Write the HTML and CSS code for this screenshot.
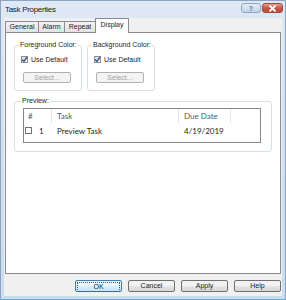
FILE: index.html
```html
<!DOCTYPE html>
<html lang="en">
<head>
  <meta charset="UTF-8">
  <title>Task Properties</title>
  <link rel="stylesheet" href="styles.css">
</head>
<body>
  <div class="window">
    <div class="titlebar">
      <span class="title">Task Properties</span>
      <div class="caption-btns">
        <span class="cap-btn help">?</span>
        <span class="cap-btn close">
          <svg width="9" height="7" viewBox="0 0 9 7"><path d="M1.5 0.5 L7.5 6.5 M7.5 0.5 L1.5 6.5" stroke="#fff" stroke-width="1.8"/></svg>
        </span>
      </div>
    </div>

    <div class="client">
      <div class="tabs">
        <span class="tab tab-general">General</span>
        <span class="tab tab-alarm">Alarm</span>
        <span class="tab tab-repeat">Repeat</span>
        <span class="tab tab-display active">Display</span>
      </div>

      <div class="panel">
        <div class="color-groups">
          <fieldset class="group">
            <legend>Foreground Color:</legend>
            <label class="check"><span class="box"><svg width="7" height="7" viewBox="0 0 7 7"><path d="M1 3.5 L3 5.5 L6 1" fill="none" stroke="#3b5a9a" stroke-width="1.4"/></svg></span>Use Default</label>
            <button class="btn" disabled>Select...</button>
          </fieldset>
          <fieldset class="group">
            <legend>Background Color:</legend>
            <label class="check"><span class="box"><svg width="7" height="7" viewBox="0 0 7 7"><path d="M1 3.5 L3 5.5 L6 1" fill="none" stroke="#3b5a9a" stroke-width="1.4"/></svg></span>Use Default</label>
            <button class="btn" disabled>Select...</button>
          </fieldset>
        </div>

        <fieldset class="group preview">
          <legend>Preview:</legend>
          <div class="list">
            <div class="list-head">
              <span class="col col-num">#</span>
              <span class="col col-task">Task</span>
              <span class="col col-due">Due Date</span>
              <span class="col col-fill"></span>
            </div>
            <div class="list-row">
              <span class="col col-num"><span class="row-box"></span>1</span>
              <span class="col col-task">Preview Task</span>
              <span class="col col-due">4/19/2019</span>
            </div>
          </div>
        </fieldset>
      </div>

      <div class="dialog-btns">
        <button class="dbtn default"><span class="focus">OK</span></button>
        <button class="dbtn">Cancel</button>
        <button class="dbtn">Apply</button>
        <button class="dbtn">Help</button>
      </div>
    </div>
  </div>
</body>
</html>
```

FILE: styles.css
```css
/* Page */
body {
  margin: 0;
  font-family: "Liberation Sans", Arial, sans-serif;
  font-size: 7px;
  color: #1e1e1e;
  background: #fff;
}

/* Window frame */
.window {
  width: 286px;
  height: 300px;
  box-sizing: border-box;
  background: linear-gradient(#dfe9f5, #d3e1f0 40%, #cadcee);
  border: 1px solid #8aa6c4;
  border-bottom-color: #56b4dc;
  display: flex;
  flex-direction: column;
}

.titlebar {
  height: 17px;
  box-sizing: border-box;
  display: flex;
  align-items: flex-start;
  padding: 2px 2px 0 4px;
}

.title {
  font-size: 8px;
  color: #1c1c1c;
  padding-top: 2px;
  letter-spacing: -0.3px;
}

.caption-btns {
  margin-left: auto;
  display: flex;
  gap: 1px;
}

.cap-btn {
  height: 10px;
  display: flex;
  align-items: center;
  justify-content: center;
  border-radius: 3px;
  box-sizing: border-box;
}

.help {
  width: 20px;
  border: 1px solid #8ea7c4;
  background: linear-gradient(#e4edf7, #c3d3e6);
  color: #5d7aa3;
  font-size: 7px;
  font-weight: bold;
}

.close {
  width: 21px;
  border: 1px solid #9a4a44;
  background: linear-gradient(#e6a296, #c75647 50%, #c9473a);
}

/* Client area */
.client {
  flex: 1;
  margin: 0 3px 3px 3px;
  background: #f0f0f0;
  display: flex;
  flex-direction: column;
  padding: 0 1px;
}

/* Tabs */
.tabs {
  display: flex;
  align-items: flex-end;
  height: 14px;
  position: relative;
  z-index: 1;
}

.tab {
  height: 10px;
  line-height: 10px;
  border: 1px solid #898c95;
  border-bottom: none;
  background: linear-gradient(#f2f2f2, #e3e3e3);
  text-align: center;
  margin-right: -1px;
  color: #1e1e1e;
  border-radius: 1px 1px 0 0;
}

.tab-general { width: 32px; }
.tab-alarm { width: 25px; }
.tab-repeat { width: 30px; }
.tab-display { width: 32px; }

.tab.active {
  height: 14px;
  line-height: 11px;
  background: #fff;
  margin-bottom: -1px;
}

/* Tab page */
.panel {
  flex: 1;
  background: #fff;
  border: 1px solid #898c95;
  padding: 8px 8px;
  display: flex;
  flex-direction: column;
  gap: 6px;
}

.color-groups {
  display: flex;
  gap: 5px;
}

.group {
  margin: 0;
  border: 1px solid #d5dfe5;
  border-radius: 3px;
  padding: 6px 2px 7px 6px;
  min-width: 0;
  width: 68px;
  box-sizing: border-box;
  display: flex;
  flex-direction: column;
  align-items: flex-start;
  gap: 8px;
}

.group legend {
  padding: 0 1px;
  margin-left: -2px;
  font-size: 7px;
  line-height: 8px;
  white-space: nowrap;
  color: #1e1e1e;
}

.check {
  display: flex;
  align-items: center;
  gap: 3px;
  height: 9px;
  white-space: nowrap;
}

.box {
  width: 7px;
  height: 7px;
  box-sizing: border-box;
  border: 1px solid #8e8f8f;
  background: linear-gradient(135deg, #dadada, #f7f7f7);
  display: flex;
  align-items: center;
  justify-content: center;
}

.box svg {
  flex: none;
}

.btn {
  margin-left: 2px;
  width: 48px;
  height: 11px;
  padding: 0;
  border: 1px solid #adb2b5;
  border-radius: 2px;
  background: #f4f4f4;
  color: #a0a0a0;
  font-family: inherit;
  font-size: 7px;
  line-height: 9px;
}

/* Preview list */
.preview {
  width: 258px;
  padding: 3px 10px 8px 8px;
  gap: 0;
}

.list {
  width: 238px;
  height: 35px;
  box-sizing: border-box;
  border: 1px solid #828790;
  font-family: Lato, "Open Sans", sans-serif;
  font-size: 8px;
}

.list-head,
.list-row {
  display: flex;
  height: 14px;
  align-items: center;
}

.list-head .col {
  height: 14px;
  line-height: 14px;
  border-right: 1px solid #e5e5e5;
  color: #4c5b6d;
}

.list-row {
  height: 15px;
  color: #1e1e1e;
}

.col {
  box-sizing: border-box;
  padding-left: 4px;
  white-space: nowrap;
}

.col-num { width: 28px; display: flex; align-items: center; }
.col-task { width: 127px; padding-left: 5px; }
.col-due { width: 52px; padding-left: 5px; }
.list-head .col-fill { flex: 1; border-right: none; }

.list-row .col-num {
  padding-left: 1px;
  gap: 7px;
}

.row-box {
  width: 7px;
  height: 7px;
  box-sizing: border-box;
  border: 1px solid #6f6f6f;
  background: #fff;
}

/* Dialog buttons */
.dialog-btns {
  display: flex;
  justify-content: flex-end;
  gap: 6px;
  padding: 6px 0 4px;
}

.dbtn {
  width: 47px;
  height: 12px;
  padding: 0;
  border: 1px solid #707070;
  border-radius: 2px;
  background: linear-gradient(#f2f2f2 45%, #e4e4e4 55%, #d6d6d6);
  font-family: inherit;
  font-size: 7px;
  line-height: 10px;
  color: #1e1e1e;
}

.dbtn.default {
  border-color: #3c7fb1;
  background: linear-gradient(#eaf6fd 45%, #d9f0fc 55%, #bee6fd);
  padding: 1px;
}

.focus {
  display: flex;
  align-items: center;
  justify-content: center;
  height: 8px;
  border: 1px dotted #555;
  color: #1e1e1e;
}
```
